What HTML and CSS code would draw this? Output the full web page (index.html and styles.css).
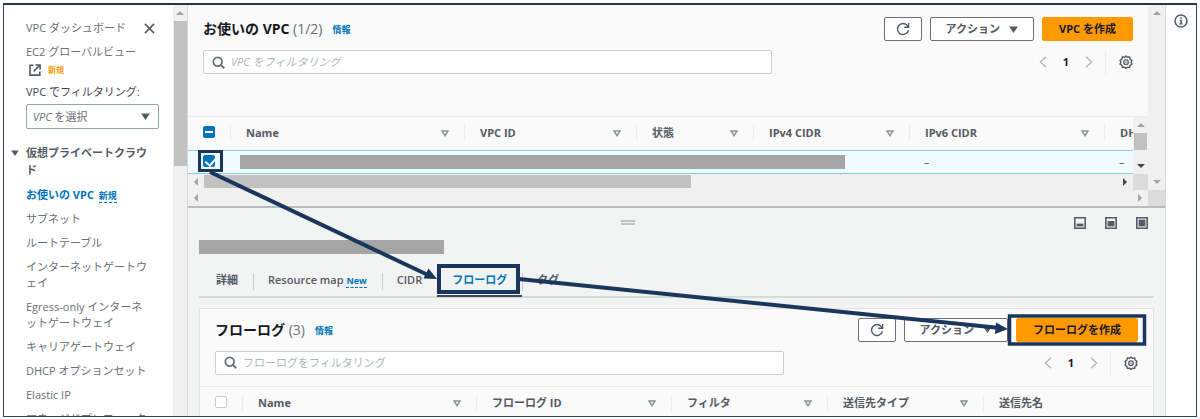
FILE: index.html
```html
<!DOCTYPE html>
<html lang="ja">

<head>
    <meta charset="UTF-8">
    <title>お使いの VPC</title>
    <link rel="stylesheet" href="styles.css">
</head>

<body>
    <svg class="sprite" aria-hidden="true">
        <symbol id="caret" viewBox="0 0 10 8">
            <path fill="currentColor" d="M0 0.5h10L5 8z" />
        </symbol>
        <symbol id="sort" viewBox="0 0 8 7">
            <path fill="none" stroke="currentColor" stroke-width="1.4" d="M1 1h6L4 5.6z" />
        </symbol>
        <symbol id="refresh" viewBox="0 0 16 16">
            <path fill="none" stroke="currentColor" stroke-width="1.6" d="M14.2 9.4A6.300 6.300 0 1 1 12.800 3.900L14 5.400M14.400 1v5H9.400" />
        </symbol>
        <symbol id="search" viewBox="0 0 16 16">
            <circle cx="7" cy="7" r="5.4" fill="none" stroke="currentColor" stroke-width="2.1" />
            <path stroke="currentColor" stroke-width="2.4" d="M10.6 10.6L15 15" />
        </symbol>
        <symbol id="prev" viewBox="0 0 8 12">
            <path fill="none" stroke="currentColor" stroke-width="1.3" d="M7 0.7L1.4 6 7 11.3" />
        </symbol>
        <symbol id="next" viewBox="0 0 8 12">
            <path fill="none" stroke="currentColor" stroke-width="1.3" d="M1 0.7L6.6 6 1 11.3" />
        </symbol>
        <symbol id="gear" viewBox="0 0 16 16">
            <path fill="none" stroke="currentColor" stroke-width="1.6" stroke-linejoin="round"
                d="M6.500 2.500L8 1l1.500 1.500 2.700-.3.500 2.500 2.100 1.300-1 2.200 1 2.200-2.100 1.300-.5 2.500-2.700-.3L8 15.300l-1.500-1.400-2.700.3-.5-2.500-2.100-1.300 1-2.200-1-2.200 2.100-1.300.5-2.500z" />
            <circle cx="8" cy="8.200" r="2.600" fill="none" stroke="currentColor" stroke-width="1.500" />
            <circle cx="8" cy="8.200" r="0.700" fill="currentColor" />
        </symbol>
        <symbol id="up" viewBox="0 0 8 4">
            <path fill="currentColor" d="M0 4h8L4 0z" />
        </symbol>
        <symbol id="down" viewBox="0 0 8 4">
            <path fill="currentColor" d="M0 0h8L4 4z" />
        </symbol>
        <symbol id="left" viewBox="0 0 4 8">
            <path fill="currentColor" d="M4 0v8L0 4z" />
        </symbol>
        <symbol id="right" viewBox="0 0 4 8">
            <path fill="currentColor" d="M0 0v8l4-4z" />
        </symbol>
    </svg>

    <div class="console">
        <nav class="sidebar">
            <div class="sidebar-content">
                <div class="sidebar-top">
                    <a href="#">VPC ダッシュボード</a>
                    <button class="icon-button" title="閉じる">
                        <svg viewBox="0 0 12 12" width="11" height="11">
                            <path stroke="currentColor" stroke-width="1.7" d="M1 1l10 10M11 1L1 11" />
                        </svg>
                    </button>
                </div>
                <a class="global-view" href="#">EC2 グローバルビュー
                    <span class="global-view-meta">
                        <svg viewBox="0 0 12 12" width="12" height="12">
                            <path fill="none" stroke="currentColor" stroke-width="1.6"
                                d="M4.500 1.300H1v9.800h9.800V7.500M6.500 1h4.600v4.600M11 1L4.600 7.400" />
                        </svg>
                        <span class="tag-new">新規</span>
                    </span>
                </a>
                <label class="filter-label" for="vpcFilter">VPC でフィルタリング:</label>
                <div class="select-box">
                    <select id="vpcFilter">
                        <option>VPC を選択</option>
                    </select>
                    <svg class="caret"><use href="#caret" /></svg>
                </div>
                <h2 class="section-title">
                    <svg class="section-caret"><use href="#caret" /></svg>
                    仮想プライベートクラウド
                </h2>
                <ul class="nav-list">
                    <li><a class="current" href="#">お使いの VPC</a> <a class="badge" href="#">新規</a></li>
                    <li><a href="#">サブネット</a></li>
                    <li><a href="#">ルートテーブル</a></li>
                    <li><a href="#">インターネットゲートウェイ</a></li>
                    <li><a href="#">Egress-only インターネットゲートウェイ</a></li>
                    <li><a href="#">キャリアゲートウェイ</a></li>
                    <li><a href="#">DHCP オプションセット</a></li>
                    <li><a href="#">Elastic IP</a></li>
                    <li><a href="#">マネージドプレフィックスリスト</a></li>
                </ul>
            </div>
            <div class="scroll-y">
                <svg class="arrow-y"><use href="#up" /></svg>
                <div class="thumb sidebar-thumb"></div>
            </div>
        </nav>

        <main class="main">
            <section class="list-pane">
                <div class="list-content">
                    <header class="list-header">
                        <div class="title-row">
                            <h1>お使いの VPC <span class="count">(1/2)</span></h1>
                            <a class="info" href="#">情報</a>
                            <div class="actions">
                                <button class="button refresh" title="更新"><svg><use href="#refresh" /></svg></button>
                                <button class="button">アクション <svg class="caret"><use href="#caret" /></svg></button>
                                <button class="button primary">VPC を作成</button>
                            </div>
                        </div>
                        <div class="filter-row">
                            <label class="search">
                                <svg><use href="#search" /></svg>
                                <input class="hint" type="text" aria-label="VPC をフィルタリング" placeholder="VPC をフィルタリング">
                            </label>
                            <div class="pager">
                                <button class="icon-button page" title="前へ"><svg><use href="#prev" /></svg></button>
                                <span class="page-number">1</span>
                                <button class="icon-button page" title="次へ"><svg><use href="#next" /></svg></button>
                                <button class="icon-button settings" title="設定"><svg><use href="#gear" /></svg></button>
                            </div>
                        </div>
                    </header>
                    <div class="table-scroll">
                        <table class="vpc-table">
                            <colgroup>
                                <col class="col-check">
                                <col class="col-wide">
                                <col class="col-id">
                                <col class="col-state">
                                <col class="col-cidr">
                                <col class="col-medium">
                                <col>
                            </colgroup>
                            <thead>
                                <tr>
                                    <th class="check"><input class="mixed" type="checkbox" aria-label="すべて選択"></th>
                                    <th><div>Name <svg><use href="#sort" /></svg></div></th>
                                    <th><div>VPC ID <svg><use href="#sort" /></svg></div></th>
                                    <th><div>状態 <svg><use href="#sort" /></svg></div></th>
                                    <th><div>IPv4 CIDR <svg><use href="#sort" /></svg></div></th>
                                    <th><div>IPv6 CIDR <svg><use href="#sort" /></svg></div></th>
                                    <th><div>DHCP</div></th>
                                </tr>
                            </thead>
                            <tbody>
                                <tr class="selected">
                                    <td class="check"><input type="checkbox" aria-label="VPC を選択" checked></td>
                                    <td class="masked" colspan="4"><div class="mask row-mask"></div></td>
                                    <td>–</td>
                                    <td>–</td>
                                </tr>
                            </tbody>
                        </table>
                        <div class="scroll-y">
                            <svg class="arrow-y"><use href="#up" /></svg>
                            <div class="thumb table-thumb"></div>
                            <svg class="arrow-y end active"><use href="#down" /></svg>
                        </div>
                        <div class="scroll-x">
                            <svg class="arrow-x"><use href="#left" /></svg>
                            <div class="thumb wide-thumb"></div>
                            <svg class="arrow-x end active"><use href="#right" /></svg>
                        </div>
                        <div class="corner"></div>
                    </div>
                </div>
                <div class="scroll-y">
                    <svg class="arrow-y"><use href="#up" /></svg>
                    <svg class="arrow-y end"><use href="#down" /></svg>
                </div>
                <div class="scroll-x">
                    <svg class="arrow-x"><use href="#left" /></svg>
                    <svg class="arrow-x end"><use href="#right" /></svg>
                </div>
                <div class="corner"></div>
            </section>

            <section class="detail-pane">
                <div class="split-bar">
                    <div class="handle"></div>
                    <div class="layout-buttons">
                        <button class="icon-button" title="小">
                            <svg viewBox="0 0 12 12" width="12" height="12">
                                <path fill="none" stroke="currentColor" stroke-width="1.6" d="M.8.8h10.400v10.400H.8z" />
                                <path fill="currentColor" d="M2.600 6.600h6.800v2.800H2.600z" />
                            </svg>
                        </button>
                        <button class="icon-button" title="中">
                            <svg viewBox="0 0 12 12" width="12" height="12">
                                <path fill="none" stroke="currentColor" stroke-width="1.6" d="M.8.8h10.400v10.400H.8z" />
                                <path fill="currentColor" d="M2.600 4h6.800v5.400H2.600z" />
                            </svg>
                        </button>
                        <button class="icon-button" title="大">
                            <svg viewBox="0 0 12 12" width="12" height="12">
                                <path fill="none" stroke="currentColor" stroke-width="1.6" d="M.8.8h10.400v10.400H.8z" />
                                <path fill="currentColor" d="M2.600 2.600h6.800v6.800H2.600z" />
                            </svg>
                        </button>
                    </div>
                </div>
                <div class="detail-body">
                    <div class="mask title-mask"></div>
                    <div class="tabs" role="tablist">
                        <button class="tab" role="tab">詳細</button>
                        <button class="tab" role="tab">Resource map <span class="badge">New</span></button>
                        <button class="tab" role="tab">CIDR</button>
                        <button class="tab active" role="tab">フローログ</button>
                        <button class="tab" role="tab">タグ</button>
                    </div>
                    <div class="card">
                        <header class="card-header">
                            <div class="title-row">
                                <h1>フローログ <span class="count">(3)</span></h1>
                                <a class="info" href="#">情報</a>
                                <div class="actions">
                                    <button class="button refresh" title="更新"><svg><use href="#refresh" /></svg></button>
                                    <button class="button">アクション <svg class="caret"><use href="#caret" /></svg></button>
                                    <button class="button primary">フローログを作成</button>
                                </div>
                            </div>
                            <div class="filter-row">
                                <label class="search">
                                    <svg><use href="#search" /></svg>
                                    <input type="text" aria-label="フローログをフィルタリング" placeholder="フローログをフィルタリング">
                                </label>
                                <div class="pager">
                                    <button class="icon-button page" title="前へ"><svg><use href="#prev" /></svg></button>
                                    <span class="page-number">1</span>
                                    <button class="icon-button page" title="次へ"><svg><use href="#next" /></svg></button>
                                    <button class="icon-button settings" title="設定"><svg><use href="#gear" /></svg></button>
                                </div>
                            </div>
                        </header>
                        <table>
                            <colgroup>
                                <col class="col-check">
                                <col class="col-wide">
                                <col class="col-medium">
                                <col class="col-cidr">
                                <col class="col-cidr">
                                <col>
                            </colgroup>
                            <thead>
                                <tr>
                                    <th class="check"><input type="checkbox" aria-label="すべて選択"></th>
                                    <th><div>Name <svg><use href="#sort" /></svg></div></th>
                                    <th><div>フローログ ID <svg><use href="#sort" /></svg></div></th>
                                    <th><div>フィルタ <svg><use href="#sort" /></svg></div></th>
                                    <th><div>送信先タイプ <svg><use href="#sort" /></svg></div></th>
                                    <th><div>送信先名</div></th>
                                </tr>
                            </thead>
                        </table>
                    </div>
                </div>
            </section>
        </main>

        <aside class="help-rail">
            <button class="icon-button" title="情報">
                <svg viewBox="0 0 14 14" width="14" height="14">
                    <circle cx="7" cy="7" r="6" fill="none" stroke="currentColor" stroke-width="1.5" />
                    <path fill="currentColor" d="M6.200 3.300h1.700v1.500H6.200zM5.400 5.800h2.500v3.600h1v1H5.200v-1h1V6.800h-.8z" />
                </svg>
            </button>
        </aside>
    </div>

    <!-- step markers: check the VPC, open the tab, press create -->
    <svg class="markers" width="1200" height="419" aria-hidden="true">
        <path fill="#fff" d="M1011 317h5v26h-5zM1138 317h5v26h-5z" />
        <g fill="none" stroke="#1b365d" stroke-width="4">
            <path d="M210 172L428 275" />
            <path d="M519 279L1000 328" />
        </g>
        <g fill="none" stroke="#1b365d" stroke-width="3">
            <rect x="199.500" y="151.500" width="22" height="19" />
            <rect x="439" y="266" width="79" height="26" stroke-width="4" />
            <rect x="1009.500" y="316" width="135" height="28" stroke-width="3.500" />
        </g>
        <path fill="#1b365d" d="M437 279l-13.500-.5 5-10zM1008 329l-13 5 1-11.500z" />
    </svg>
</body>

</html>
```

FILE: styles.css
```css
* {
    box-sizing: border-box;
}

body {
    margin: 0;
    padding: 3px 3px 2px;
    height: 100vh;
    background: #fff;
    color: #545b64;
    font-family: "Open Sans", "Noto Sans CJK JP", sans-serif;
    font-size: 11px;
    line-height: 16px;
    overflow: hidden;
}

button,
input,
select {
    font: inherit;
    color: inherit;
}

svg {
    display: block;
    flex: none;
}

a {
    color: inherit;
    text-decoration: none;
}

.sprite {
    display: none;
}

.console {
    display: flex;
    height: 100%;
    border: 1px solid #2b4668;
    border-top: 2px solid #26354f;
    overflow: hidden;
}

.icon-button {
    display: flex;
    padding: 0;
    border: 0;
    background: none;
    color: #545b64;
    cursor: pointer;
}

/* sidebar */
.sidebar {
    display: flex;
    width: 184px;
    flex: none;
    border-right: 1px solid #d5d9da;
}

.sidebar-content {
    flex: 1;
    padding: 15px 14px 0 22px;
}

.sidebar-top {
    display: flex;
    justify-content: space-between;
    align-items: center;
    padding-right: 4px;
    margin-bottom: 8px;
    color: #687078;
}

.global-view {
    display: block;
    color: #687078;
}

.global-view-meta {
    display: flex;
    align-items: center;
    gap: 7px;
    height: 20px;
    padding-left: 3px;
    color: #545b64;
}

.tag-new {
    color: #ff9900;
    font-size: 8px;
    font-weight: bold;
}

.filter-label {
    display: block;
    margin: 4px 0;
    color: #414750;
}

.select-box {
    display: flex;
    align-items: center;
    width: 133px;
    height: 25px;
    padding-right: 8px;
    border: 1px solid #95a5a6;
    border-radius: 2px;
    background: #fff;
}

.select-box select {
    flex: 1;
    appearance: none;
    padding: 0 6px;
    border: 0;
    background: none;
    color: #687078;
    font-style: italic;
    font-synthesis: none;
}

.caret {
    width: 9px;
    height: 7px;
    color: #545b64;
}

.section-title {
    position: relative;
    margin: 15px 10px 9px 0;
    font-size: 11px;
    line-height: 17px;
    color: #545b64;
    line-break: loose;
}

.section-caret {
    position: absolute;
    left: -15px;
    top: 6px;
    width: 8px;
    height: 6px;
}

.nav-list {
    display: flex;
    flex-direction: column;
    gap: 8px;
    margin: 0 10px 0 0;
    padding: 0;
    list-style: none;
    color: #687078;
    line-break: loose;
}

.nav-list .current {
    color: #0073bb;
    font-weight: bold;
}

.badge {
    border-bottom: 1px dashed #0073bb;
    color: #0073bb;
    font-size: 9px;
    line-height: 10px;
    font-weight: bold;
}

.nav-list .badge {
    margin-left: 2px;
}

/* scrollbars */
.scroll-y {
    display: flex;
    flex-direction: column;
    align-items: center;
    width: 15px;
    padding: 6px 0;
    background: #f0f0f0;
    color: #a3a3a3;
}

.scroll-x {
    display: flex;
    align-items: center;
    height: 16px;
    padding: 0 6px;
    background: #f0f0f0;
    color: #a3a3a3;
}

.arrow-y {
    width: 8px;
    height: 4px;
}

.arrow-x {
    width: 4px;
    height: 8px;
}

.arrow-y.end {
    margin-top: auto;
}

.arrow-x.end {
    margin-left: auto;
}

.scroll-y .active,
.scroll-x .active {
    color: #444;
}

.thumb {
    background: #c1c1c1;
}

.sidebar-thumb {
    width: 13px;
    height: 145px;
    margin-top: 6px;
}

.table-thumb {
    width: 13px;
    height: 17px;
    margin-top: 6px;
}

.wide-thumb {
    width: 487px;
    height: 13px;
    margin-left: 6px;
}

.corner {
    background: #dcdcdc;
}

/* vpc list */
.main {
    flex: 1;
    min-width: 0;
    display: flex;
    flex-direction: column;
    background: #f2f3f3;
}

.list-pane {
    display: grid;
    grid-template-columns: minmax(0, 1fr) 17px;
    flex: none;
    border-bottom: 2px solid #b7bdc1;
    background: #fafafa;
}

.list-pane > .scroll-y {
    width: 17px;
}

.list-header {
    padding: 12px 15px 42px;
    border-bottom: 1px solid #eaeded;
}

.title-row {
    display: flex;
    align-items: center;
}

h1 {
    margin: 0;
    color: #16191f;
    font-size: 14px;
    line-height: 24px;
}

.count {
    color: #687078;
    font-weight: normal;
}

.info {
    margin: 2px 0 0 10px;
    color: #0073bb;
    font-size: 9px;
    font-weight: bold;
}

.actions {
    display: flex;
    gap: 8px;
    margin-left: auto;
}

.button {
    display: flex;
    align-items: center;
    gap: 9px;
    height: 24px;
    padding: 0 15px;
    border: 1px solid #687078;
    border-radius: 2px;
    background: #fff;
    color: #545b64;
    font-weight: bold;
    white-space: nowrap;
    cursor: pointer;
}

.refresh {
    padding: 0 11px;
}

.refresh svg {
    width: 14px;
    height: 14px;
}

.primary {
    padding: 0 16px;
    border-color: #ff9900;
    background: #ff9900;
    color: #16191f;
}

.filter-row {
    display: flex;
    align-items: center;
    justify-content: space-between;
    margin-top: 9px;
}

.search {
    display: flex;
    align-items: center;
    gap: 6px;
    width: 569px;
    height: 24px;
    padding: 0 8px;
    border: 1px solid #c8d0d1;
    border-radius: 2px;
    background: #fff;
    color: #687078;
}

.search svg {
    width: 13px;
    height: 13px;
}

.search input {
    flex: 1;
    padding: 0;
    border: 0;
    outline: 0;
    background: none;
}

.search input::placeholder {
    color: #aab7b8;
}

.search .hint::placeholder {
    font-style: italic;
}

.pager {
    display: flex;
    align-items: center;
    gap: 16px;
}

.page {
    color: #aab7b8;
}

.page svg {
    width: 8px;
    height: 12px;
}

.page-number {
    color: #16191f;
    font-weight: bold;
}

.settings {
    align-items: center;
    height: 24px;
    margin-left: -4px;
    padding-left: 13px;
    border-left: 1px solid #eaeded;
}

.settings svg {
    width: 14px;
    height: 14px;
}

/* tables */
table {
    width: 100%;
    table-layout: fixed;
    border-collapse: collapse;
}

.col-check {
    width: 42px;
}

.col-wide {
    width: 234px;
}

.col-medium {
    width: 195px;
}

.col-id {
    width: 172px;
}

.col-state {
    width: 117px;
}

.col-cidr {
    width: 156px;
}

th {
    height: 33px;
    padding: 0;
    text-align: left;
    white-space: nowrap;
    overflow: hidden;
}

th div {
    display: flex;
    align-items: center;
    justify-content: space-between;
    padding: 0 15px;
    border-left: 1px solid #eaeded;
}

th svg {
    width: 8px;
    height: 7px;
    color: #879596;
}

td {
    height: 23px;
    padding: 0 15px;
    border-top: 1px solid #84d1e6;
    border-bottom: 1px solid #84d1e6;
}

.selected {
    background: #f1faff;
}

.check {
    padding: 0 0 2px 15px;
}

.masked {
    padding: 0 10px;
}

.mask {
    background: #a5a5a5;
    height: 14px;
}

.row-mask {
    width: 605px;
}

input[type="checkbox"] {
    appearance: none;
    display: block;
    position: relative;
    width: 12px;
    height: 12px;
    margin: 0;
    border: 1px solid #c3cbcc;
    border-radius: 2px;
    background: #fff;
}

input[type="checkbox"]:checked,
input[type="checkbox"].mixed {
    border-color: #0073bb;
    background: #0073bb;
}

input[type="checkbox"]:checked::after {
    content: "";
    position: absolute;
    left: 3px;
    top: 0;
    width: 5px;
    height: 8px;
    border: solid #fff;
    border-width: 0 2px 2px 0;
    transform: rotate(40deg);
}

input[type="checkbox"].mixed::after {
    content: "";
    position: absolute;
    left: 1px;
    top: 4px;
    width: 8px;
    height: 2px;
    background: #fff;
}

.table-scroll {
    display: grid;
    grid-template-columns: minmax(0, 1fr) 15px;
}

/* detail pane */
.split-bar {
    display: flex;
    align-items: center;
    height: 30px;
    padding-right: 17px;
}

.handle {
    width: 14px;
    height: 5px;
    margin: 0 auto;
    border: solid #bfc4c5;
    border-width: 2px 0;
}

.layout-buttons {
    display: flex;
    gap: 19px;
    padding-left: 6px;
}

.detail-body {
    padding: 2px 11px 0;
}

.title-mask {
    width: 245px;
}

.tabs {
    display: flex;
    margin: 11px 0 10px;
    padding-left: 2px;
    border-bottom: 2px solid #d5dbdb;
}

.tab {
    position: relative;
    padding: 7px 15px 8px;
    border: 0;
    background: none;
    font-weight: 600;
    cursor: pointer;
}

.tab + .tab::before {
    content: "";
    position: absolute;
    left: 0;
    top: 8px;
    height: 17px;
    border-left: 1px solid #c3cbcc;
}

.tab.active {
    color: #0073bb;
}

.tab.active::after {
    content: "";
    position: absolute;
    left: 0;
    right: 0;
    bottom: -1px;
    border-bottom: 2px solid #414750;
}

.card {
    border: 1px solid #dfe3e3;
    background: #fafafa;
}

.card-header {
    padding: 9px 15px 11px;
    border-bottom: 1px solid #eaeded;
}

/* right rail */
.help-rail {
    display: flex;
    justify-content: center;
    align-items: flex-start;
    width: 31px;
    flex: none;
    padding-top: 9px;
    border-left: 1px solid #d5d9da;
}

.markers {
    position: absolute;
    left: 0;
    top: 0;
    pointer-events: none;
}
```
